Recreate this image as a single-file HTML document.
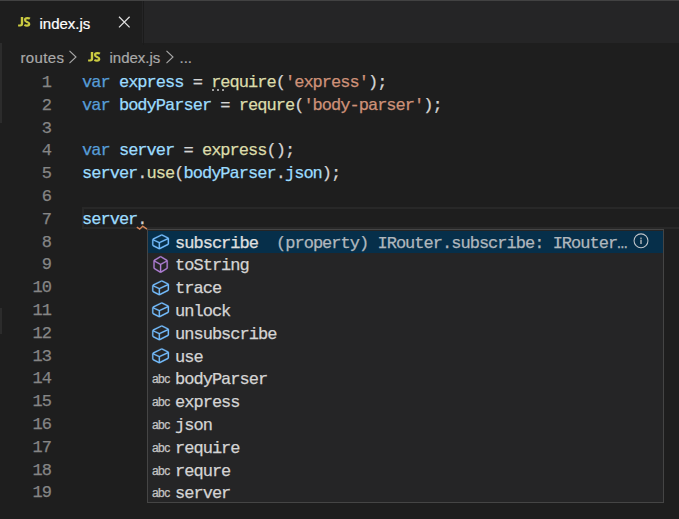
<!DOCTYPE html>
<html><head><meta charset="utf-8"><style>
*{margin:0;padding:0;box-sizing:border-box}
html,body{width:679px;height:519px;overflow:hidden;background:#1e1e1e}
body{position:relative;font-family:"Liberation Sans",sans-serif}
.abs{position:absolute}
.ui{font-family:"Liberation Sans",sans-serif;font-size:15px;white-space:pre;-webkit-text-stroke:0.2px currentColor}
.js{font-family:"Liberation Sans",sans-serif;font-size:12.5px;font-weight:bold;color:#cbcb41;letter-spacing:-0.9px;line-height:14px}
.mono{font-family:"Liberation Mono",monospace;font-size:17.0px;letter-spacing:-0.98px;white-space:pre;-webkit-text-stroke:0.25px currentColor}
.ln{position:absolute;left:0;width:51px;text-align:right;color:#858585;height:22.8px;line-height:22.8px}
.cl{position:absolute;left:82px;height:22.8px;line-height:22.8px}
.row{position:absolute;left:0;width:515px;height:22.8px;line-height:22.8px;color:#d4d4d4}
.row .t{position:absolute;left:27px;top:1.6px}
.row .ic{position:absolute;left:2.5px;top:1px;width:19.2px;height:19.2px}
.abc{position:absolute;left:4px;top:0.5px;font-family:"Liberation Sans",sans-serif;font-size:12px;letter-spacing:-0.6px;color:#c5c5c5}
</style></head><body>

<div class="abs" style="left:0;top:0;width:679px;height:43px;background:#252526"></div>
<div class="abs" style="left:0;top:0;width:679px;height:1px;background:#424242"></div>
<div class="abs" style="left:0;top:1px;width:142px;height:42px;background:#1e1e1e"></div>
<div class="abs" style="left:142.5px;top:1px;width:1.5px;height:43.5px;background:#1b1b1b"></div>
<svg class="abs" style="left:17px;top:16px" width="16" height="12" viewBox="0 0 16 12"><path fill="#cbcb41" d="M3.8 1.1H6.2V7.6C6.2 9.8 5 10.6 3.2 10.6H1.1V8.4H3C3.6 8.4 3.8 8.1 3.8 7.5Z"/><path fill="none" stroke="#cbcb41" stroke-width="2.1" d="M12.9 2.7C12.2 2.2 11.3 2.1 10.3 2.1C8.8 2.1 8 2.8 8 3.9C8 6.4 12.3 5.4 12.3 8.1C12.3 9.1 11.5 9.6 10 9.6C8.9 9.6 8.1 9.3 7.4 8.8"/></svg>
<div class="abs ui" style="left:39.5px;top:14.5px;color:#ffffff">index.js</div>
<svg class="abs" style="left:118px;top:16px" width="13" height="13" viewBox="0 0 13 13"><path d="M1 0.8L11.6 11.4M11.6 0.8L1 11.4" stroke="#e0e0e0" stroke-width="1.25"/></svg>
<div class="abs ui" style="left:20.5px;top:49px;color:#a9a9a9;letter-spacing:0.35px">routes</div>
<svg class="abs" style="left:68px;top:50px" width="10" height="14" viewBox="0 0 10 14"><path d="M1.5 0.8L8 7L1.5 13.2" fill="none" stroke="#a9a9a9" stroke-width="1.1"/></svg>
<svg class="abs" style="left:87px;top:50.5px" width="16" height="12" viewBox="0 0 16 12"><path fill="#cbcb41" d="M3.8 1.1H6.2V7.6C6.2 9.8 5 10.6 3.2 10.6H1.1V8.4H3C3.6 8.4 3.8 8.1 3.8 7.5Z"/><path fill="none" stroke="#cbcb41" stroke-width="2.1" d="M12.9 2.7C12.2 2.2 11.3 2.1 10.3 2.1C8.8 2.1 8 2.8 8 3.9C8 6.4 12.3 5.4 12.3 8.1C12.3 9.1 11.5 9.6 10 9.6C8.9 9.6 8.1 9.3 7.4 8.8"/></svg>
<div class="abs ui" style="left:109.5px;top:49px;color:#a9a9a9">index.js</div>
<svg class="abs" style="left:164.5px;top:50px" width="10" height="14" viewBox="0 0 10 14"><path d="M1.5 0.8L8 7L1.5 13.2" fill="none" stroke="#a9a9a9" stroke-width="1.1"/></svg>
<div class="abs ui" style="left:179.5px;top:49px;color:#a9a9a9">...</div>
<div class="abs" style="left:0;top:43px;width:1.5px;height:79.5px;background:#2c2c2c"></div>
<div class="abs" style="left:0;top:307.5px;width:1.5px;height:26.5px;background:#2c2c2c"></div>
<div class="abs" style="left:82px;top:206.80px;width:600px;height:22.4px;border:2px solid #282828"></div>
<div class="ln mono" style="top:72.00px;color:#858585">1</div>
<div class="cl mono" style="top:72.00px"><span style="color:#569cd6">var</span><span style="color:#d4d4d4"> </span><span style="color:#9cdcfe">express</span><span style="color:#d4d4d4"> = </span><span style="color:#dcdcaa">require</span><span style="color:#d4d4d4">(</span><span style="color:#ce9178">'express'</span><span style="color:#d4d4d4">);</span></div>
<div class="ln mono" style="top:94.80px;color:#858585">2</div>
<div class="cl mono" style="top:94.80px"><span style="color:#569cd6">var</span><span style="color:#d4d4d4"> </span><span style="color:#9cdcfe">bodyParser</span><span style="color:#d4d4d4"> = </span><span style="color:#dcdcaa">requre</span><span style="color:#d4d4d4">(</span><span style="color:#ce9178">'body-parser'</span><span style="color:#d4d4d4">);</span></div>
<div class="ln mono" style="top:117.60px;color:#858585">3</div>
<div class="ln mono" style="top:140.40px;color:#858585">4</div>
<div class="cl mono" style="top:140.40px"><span style="color:#569cd6">var</span><span style="color:#d4d4d4"> </span><span style="color:#9cdcfe">server</span><span style="color:#d4d4d4"> = </span><span style="color:#dcdcaa">express</span><span style="color:#d4d4d4">();</span></div>
<div class="ln mono" style="top:163.20px;color:#858585">5</div>
<div class="cl mono" style="top:163.20px"><span style="color:#9cdcfe">server</span><span style="color:#d4d4d4">.</span><span style="color:#dcdcaa">use</span><span style="color:#d4d4d4">(</span><span style="color:#9cdcfe">bodyParser</span><span style="color:#d4d4d4">.</span><span style="color:#9cdcfe">json</span><span style="color:#d4d4d4">);</span></div>
<div class="ln mono" style="top:186.00px;color:#858585">6</div>
<div class="ln mono" style="top:208.80px;color:#858585">7</div>
<div class="cl mono" style="top:208.80px"><span style="color:#9cdcfe">server</span><span style="color:#d4d4d4">.</span></div>
<div class="ln mono" style="top:231.60px;color:#858585">8</div>
<div class="ln mono" style="top:254.40px;color:#858585">9</div>
<div class="ln mono" style="top:277.20px;color:#858585">10</div>
<div class="ln mono" style="top:300.00px;color:#858585">11</div>
<div class="ln mono" style="top:322.80px;color:#858585">12</div>
<div class="ln mono" style="top:345.60px;color:#858585">13</div>
<div class="ln mono" style="top:368.40px;color:#858585">14</div>
<div class="ln mono" style="top:391.20px;color:#858585">15</div>
<div class="ln mono" style="top:414.00px;color:#858585">16</div>
<div class="ln mono" style="top:436.80px;color:#858585">17</div>
<div class="ln mono" style="top:459.60px;color:#858585">18</div>
<div class="ln mono" style="top:482.40px;color:#858585">19</div>
<div class="abs" style="left:212px;top:89px;width:2px;height:2px;background:#a0a0a0"></div>
<div class="abs" style="left:217px;top:89px;width:2px;height:2px;background:#a0a0a0"></div>
<div class="abs" style="left:222px;top:89px;width:2px;height:2px;background:#a0a0a0"></div>
<svg class="abs" style="left:0;top:0" width="679" height="519" viewBox="0 0 679 519"><path d="M136.8 227.1L139.7 229.1L142.7 226.2L147 229.1" fill="none" stroke="#d5885a" stroke-width="1.3"/></svg>
<div class="abs" style="left:147px;top:229px;width:517px;height:274px;background:#252526;border:1px solid #454545;overflow:hidden">
<div class="abs" style="left:0;top:1px;width:515px;height:22.2px;background:#062f4a"></div>
<div class="row mono" style="top:1.00px;"><svg class="ic" viewBox="0 0 16 16"><path fill="#75beff" stroke="#75beff" stroke-width="0.2" d="M14.45 4.5l-5-2.5h-.9l-7 3.5-.55.89v4.5l.55.9 5 2.5h.9l7-3.5.55-.9v-4.5l-.55-.89zm-8 8.64l-4.5-2.25V7.17l4.5 2v3.97zm.5-4.8L2.29 6.23l6.66-3.3 4.67 2.34-6.67 3.06zm7 1.55l-6.5 3.25V9.21l6.5-3v3.69z"/></svg><div class="t" style="color:#e0e0e0">subscribe</div><div class="mono abs" style="left:128px;top:1.6px;color:#b0b7bd">(property) IRouter.subscribe: IRouter…</div><svg class="abs" style="left:483px;top:0" width="20" height="22" viewBox="0 0 20 22"><circle cx="10" cy="9.8" r="6.95" fill="none" stroke="#bfc4c9" stroke-width="1.05"/><rect x="9.35" y="8.6" width="1.3" height="4.4" fill="#c5c5c5"/><rect x="9.35" y="6.6" width="1.3" height="1.3" fill="#c5c5c5"/></svg></div>
<div class="row mono" style="top:23.80px;"><svg class="ic" viewBox="0 0 16 16"><path fill="#b180d7" stroke="#b180d7" stroke-width="0.2" d="M13.51 4l-5-3h-1l-5 3-.49.86v6l.49.85 5 3h1l5-3 .49-.85v-6L13.51 4zm-6 9.56l-4.5-2.7V5.7l4.5 2.45v5.41zM3.27 4.7l4.74-2.84 4.74 2.84-4.74 2.59L3.27 4.7zm9.74 6.16l-4.5 2.7V8.15l4.5-2.45v5.16z"/></svg><div class="t" style="color:#d4d4d4">toString</div></div>
<div class="row mono" style="top:46.60px;"><svg class="ic" viewBox="0 0 16 16"><path fill="#75beff" stroke="#75beff" stroke-width="0.2" d="M14.45 4.5l-5-2.5h-.9l-7 3.5-.55.89v4.5l.55.9 5 2.5h.9l7-3.5.55-.9v-4.5l-.55-.89zm-8 8.64l-4.5-2.25V7.17l4.5 2v3.97zm.5-4.8L2.29 6.23l6.66-3.3 4.67 2.34-6.67 3.06zm7 1.55l-6.5 3.25V9.21l6.5-3v3.69z"/></svg><div class="t" style="color:#d4d4d4">trace</div></div>
<div class="row mono" style="top:69.40px;"><svg class="ic" viewBox="0 0 16 16"><path fill="#75beff" stroke="#75beff" stroke-width="0.2" d="M14.45 4.5l-5-2.5h-.9l-7 3.5-.55.89v4.5l.55.9 5 2.5h.9l7-3.5.55-.9v-4.5l-.55-.89zm-8 8.64l-4.5-2.25V7.17l4.5 2v3.97zm.5-4.8L2.29 6.23l6.66-3.3 4.67 2.34-6.67 3.06zm7 1.55l-6.5 3.25V9.21l6.5-3v3.69z"/></svg><div class="t" style="color:#d4d4d4">unlock</div></div>
<div class="row mono" style="top:92.20px;"><svg class="ic" viewBox="0 0 16 16"><path fill="#75beff" stroke="#75beff" stroke-width="0.2" d="M14.45 4.5l-5-2.5h-.9l-7 3.5-.55.89v4.5l.55.9 5 2.5h.9l7-3.5.55-.9v-4.5l-.55-.89zm-8 8.64l-4.5-2.25V7.17l4.5 2v3.97zm.5-4.8L2.29 6.23l6.66-3.3 4.67 2.34-6.67 3.06zm7 1.55l-6.5 3.25V9.21l6.5-3v3.69z"/></svg><div class="t" style="color:#d4d4d4">unsubscribe</div></div>
<div class="row mono" style="top:115.00px;"><svg class="ic" viewBox="0 0 16 16"><path fill="#75beff" stroke="#75beff" stroke-width="0.2" d="M14.45 4.5l-5-2.5h-.9l-7 3.5-.55.89v4.5l.55.9 5 2.5h.9l7-3.5.55-.9v-4.5l-.55-.89zm-8 8.64l-4.5-2.25V7.17l4.5 2v3.97zm.5-4.8L2.29 6.23l6.66-3.3 4.67 2.34-6.67 3.06zm7 1.55l-6.5 3.25V9.21l6.5-3v3.69z"/></svg><div class="t" style="color:#d4d4d4">use</div></div>
<div class="row mono" style="top:137.80px;"><div class="abc">abc</div><div class="t" style="color:#d4d4d4">bodyParser</div></div>
<div class="row mono" style="top:160.60px;"><div class="abc">abc</div><div class="t" style="color:#d4d4d4">express</div></div>
<div class="row mono" style="top:183.40px;"><div class="abc">abc</div><div class="t" style="color:#d4d4d4">json</div></div>
<div class="row mono" style="top:206.20px;"><div class="abc">abc</div><div class="t" style="color:#d4d4d4">require</div></div>
<div class="row mono" style="top:229.00px;"><div class="abc">abc</div><div class="t" style="color:#d4d4d4">requre</div></div>
<div class="row mono" style="top:251.80px;"><div class="abc">abc</div><div class="t" style="color:#d4d4d4">server</div></div>
</div>
</body></html>
